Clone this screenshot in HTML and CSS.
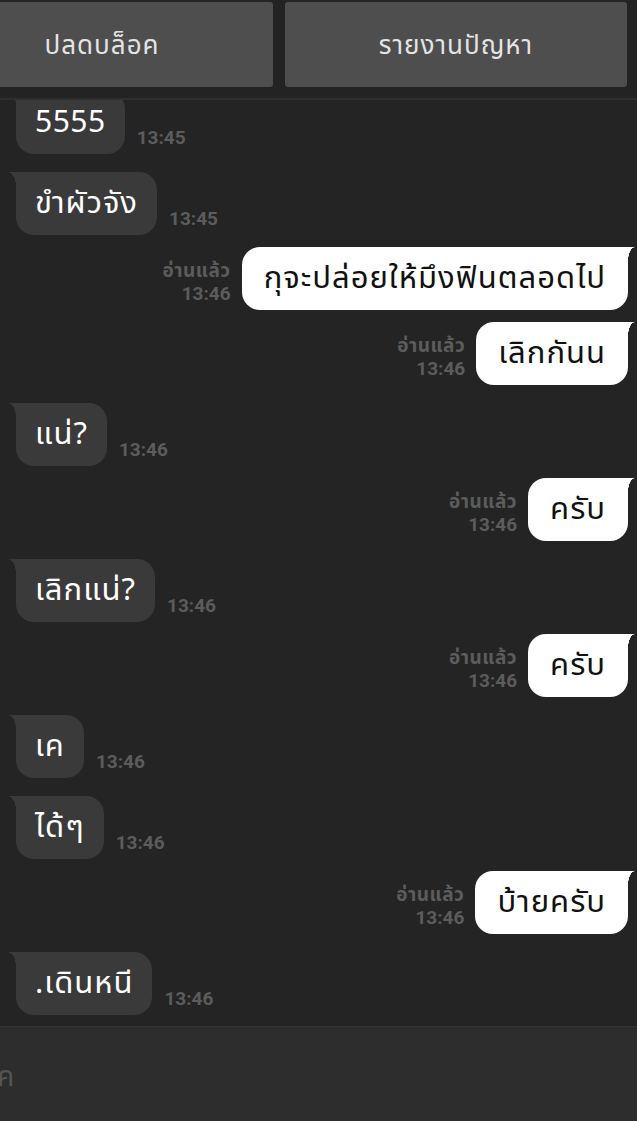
FILE: index.html
```html
<!DOCTYPE html>
<html lang="th">
<head>
<meta charset="utf-8">
<link rel="stylesheet" href="styles.css">
</head>
<body>
<div class="screen">
  <header class="topbar">
    <div class="btn">ปลดบล็อค</div>
    <div class="btn">รายงานปัญหา</div>
  </header>
  <main class="chat">
    <div class="list">
      <div class="row in"><div class="bubble num">5555</div><div class="meta"><span class="time">13:45</span></div></div>
      <div class="row in"><div class="bubble">ขำผัวจัง</div><div class="meta"><span class="time">13:45</span></div></div>
      <div class="row out"><div class="meta"><span class="read">อ่านแล้ว</span><span class="time">13:46</span></div><div class="bubble">กุจะปล่อยให้มึงฟินตลอดไป</div></div>
      <div class="row out"><div class="meta"><span class="read">อ่านแล้ว</span><span class="time">13:46</span></div><div class="bubble">เลิกกันน</div></div>
      <div class="row in"><div class="bubble">แน่?</div><div class="meta"><span class="time">13:46</span></div></div>
      <div class="row out"><div class="meta"><span class="read">อ่านแล้ว</span><span class="time">13:46</span></div><div class="bubble">ครับ</div></div>
      <div class="row in"><div class="bubble">เลิกแน่?</div><div class="meta"><span class="time">13:46</span></div></div>
      <div class="row out"><div class="meta"><span class="read">อ่านแล้ว</span><span class="time">13:46</span></div><div class="bubble">ครับ</div></div>
      <div class="row in"><div class="bubble">เค</div><div class="meta"><span class="time">13:46</span></div></div>
      <div class="row in"><div class="bubble">ได้ๆ</div><div class="meta"><span class="time">13:46</span></div></div>
      <div class="row out"><div class="meta"><span class="read">อ่านแล้ว</span><span class="time">13:46</span></div><div class="bubble">บ้ายครับ</div></div>
      <div class="row in"><div class="bubble">.เดินหนี</div><div class="meta"><span class="time">13:46</span></div></div>
    </div>
  </main>
  <footer class="inputbar">
    <span class="placeholder">ค</span>
  </footer>
</div>
</body>
</html>
```
FILE: styles.css
```css
* { box-sizing: border-box; }
html, body { margin: 0; padding: 0; }
body {
  background: #242424;
  font-family: "Noto Sans Thai", "Noto Sans", Roboto, sans-serif;
  overflow: hidden;
}
.screen {
  width: 637px;
  height: 1121px;
  display: flex;
  flex-direction: column;
  overflow: hidden;
}
.topbar {
  height: 100px;
  flex: none;
  display: flex;
  gap: 12px;
  padding-top: 2px;
  margin-left: -69px;
  background: #232323;
  border-bottom: 2px solid #2f2f2f;
}
.btn {
  width: 342px;
  height: 85px;
  padding-top: 3px;
  background: #4e4e4e;
  border-radius: 3px;
  color: #e4e4e4;
  font-size: 26px;
  letter-spacing: 1px;
  display: flex;
  align-items: center;
  justify-content: center;
}
.chat {
  flex: 1;
  overflow: hidden;
  background: #242424;
}
.list {
  margin-top: -9px;
  display: flex;
  flex-direction: column;
  padding: 0 9px 0 16px;
}
.row {
  display: flex;
  align-items: flex-end;
  gap: 12px;
  margin-top: 12px;
}
.row.in { margin-top: 18px; }
.row.in:first-child { margin-top: 0; }
.row.out { justify-content: flex-end; gap: 11px; }
.bubble {
  position: relative;
  height: 63px;
  padding: 0 19px;
  display: flex;
  align-items: center;
  font-size: 31px;
  letter-spacing: 1px;
  border-radius: 18px;
  white-space: nowrap;
}
.bubble.num { font-size: 30px; letter-spacing: 0.5px; }
.row.in .bubble {
  background: #3a3a3a;
  color: #fff;
  border-top-left-radius: 0;
}
.row.in .bubble::before {
  content: "";
  position: absolute;
  left: -8px;
  top: 0;
  width: 8px;
  height: 14px;
  background: radial-gradient(8px 14px at 0 100%, transparent 96%, #3a3a3a 100%);
}
.row.out .bubble {
  padding: 0 22px;
  background: #fff;
  color: #111;
  border-top-right-radius: 0;
}
.row.out .bubble::before {
  content: "";
  position: absolute;
  right: -7px;
  top: 0;
  width: 7px;
  height: 14px;
  background: radial-gradient(7px 14px at 100% 100%, transparent 96%, #fff 100%);
}
.meta {
  display: flex;
  flex-direction: column;
  align-items: flex-end;
  margin-bottom: 5px;
  font-family: Roboto, "Noto Sans Thai", sans-serif;
  font-weight: bold;
  color: #5c5c5c;
  line-height: 23px;
}
.time { font-size: 19px; }
.read { font-size: 19px; letter-spacing: 0.5px; }
.inputbar {
  height: 95px;
  flex: none;
  background: #2d2d2d;
  border-top: 1px solid #333;
  display: flex;
  align-items: center;
  padding-top: 6px;
}
.placeholder {
  margin-left: -3px;
  font-size: 28px;
  color: #545454;
}
```
